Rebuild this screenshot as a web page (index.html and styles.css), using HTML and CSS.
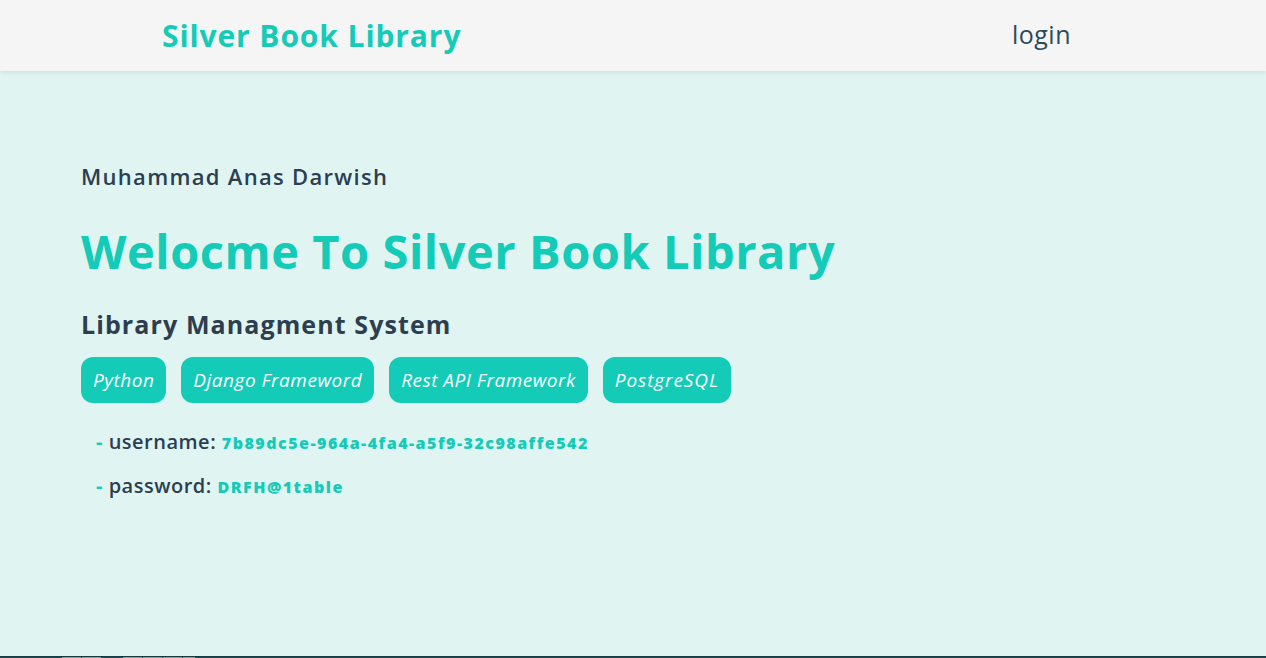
FILE: index.html
```html
<!DOCTYPE html>
<html lang="en">
<head>
<meta charset="utf-8">
<title>Silver Book Library</title>
<link rel="stylesheet" href="styles.css">
</head>
<body>
<header class="topbar">
  <a class="brand" href="#">Silver Book Library</a>
  <a class="login" href="#">login</a>
</header>
<main class="hero">
  <p class="author">Muhammad Anas Darwish</p>
  <h1 class="title">Welocme To Silver Book Library</h1>
  <h2 class="subtitle">Library Managment System</h2>
  <ul class="chips">
    <li class="chip">Python</li>
    <li class="chip">Django Frameword</li>
    <li class="chip">Rest API Framework</li>
    <li class="chip">PostgreSQL</li>
  </ul>
  <ul class="creds">
    <li class="cred"><span class="dash">-</span> username: <span class="val">7b89dc5e-964a-4fa4-a5f9-32c98affe542</span></li>
    <li class="cred"><span class="dash">-</span> password: <span class="val">DRFH@1table</span></li>
  </ul>
</main>
<footer class="footer">
  <div class="footer-links">
    <span class="fl"></span><span class="fl"></span>
    <span class="gap"></span>
    <span class="fl"></span><span class="fl"></span><span class="fl"></span><span class="fl small"></span>
  </div>
</footer>
</body>
</html>
```
FILE: styles.css
```css
html::-webkit-scrollbar { width: 3px; }
html::-webkit-scrollbar-track { background: #f1f1f1; }
html::-webkit-scrollbar-thumb { background: #a9a9a9; }

* { box-sizing: border-box; }

body {
  margin: 0;
  background: #e0f5f2;
  font-family: "Open Sans", "Liberation Sans", sans-serif;
  color: #2c3e50;
}

.topbar {
  height: 71px;
  background: #f5f5f5;
  box-shadow: 0 2px 4px rgba(0,0,0,0.08);
  display: flex;
  align-items: center;
  justify-content: space-between;
  padding: 0 195px 0 162px;
  position: relative;
}

.brand {
  color: #13cbb7;
  font-weight: 700;
  font-size: 30px;
  text-decoration: none;
  letter-spacing: 0.9px;
}

.login {
  color: #2c4a5a;
  font-size: 25px;
  text-decoration: none;
  font-weight: 400;
  letter-spacing: 0.5px;
  margin-top: -4px;
}

.hero {
  padding: 90px 81px 0;
  height: 585px;
}

.author {
  margin: 0;
  font-size: 22px;
  font-weight: 600;
  line-height: 30px;
  letter-spacing: 1.3px;
}

.title {
  margin: 32px 0 0;
  color: #13cbb7;
  font-size: 47px;
  font-weight: 700;
  line-height: 56px;
  letter-spacing: 0.55px;
}

.subtitle {
  margin: 28px 0 0;
  font-size: 25px;
  font-weight: 700;
  line-height: 34px;
  letter-spacing: 1.1px;
}

.chips {
  list-style: none;
  margin: 16px 0 0;
  padding: 0;
  display: flex;
  gap: 15px;
}

.chip {
  background: #13cbb7;
  color: #fff;
  font-style: italic;
  font-size: 19px;
  height: 46px;
  display: flex;
  align-items: center;
  padding: 0 12px;
  border-radius: 12px;
  letter-spacing: 0.5px;
}

.chip:last-child { letter-spacing: 0.9px; }

.creds {
  list-style: none;
  margin: 26px 0 0;
  padding: 0 0 0 15px;
  display: flex;
  flex-direction: column;
  gap: 17px;
}

.cred {
  font-size: 20px;
  font-weight: 600;
  line-height: 26px;
  letter-spacing: 0.5px;
}

.dash { color: #13cbb7; font-weight: 700; }

.val {
  color: #13cbb7;
  font-size: 16px;
  font-weight: 800;
  letter-spacing: 1.5px;
}

.footer {
  background: #1f4f55;
  border-top: 1px solid #17393d;
  height: 1620px;
}

.footer-links {
  display: flex;
  gap: 1px;
  padding-left: 62px;
}

.fl {
  width: 19px;
  height: 4px;
  background: #5d7f83;
  border: 1px solid #8aa3a6;
}

.fl.small { width: 12px; }
.gap { width: 20px; }
```
